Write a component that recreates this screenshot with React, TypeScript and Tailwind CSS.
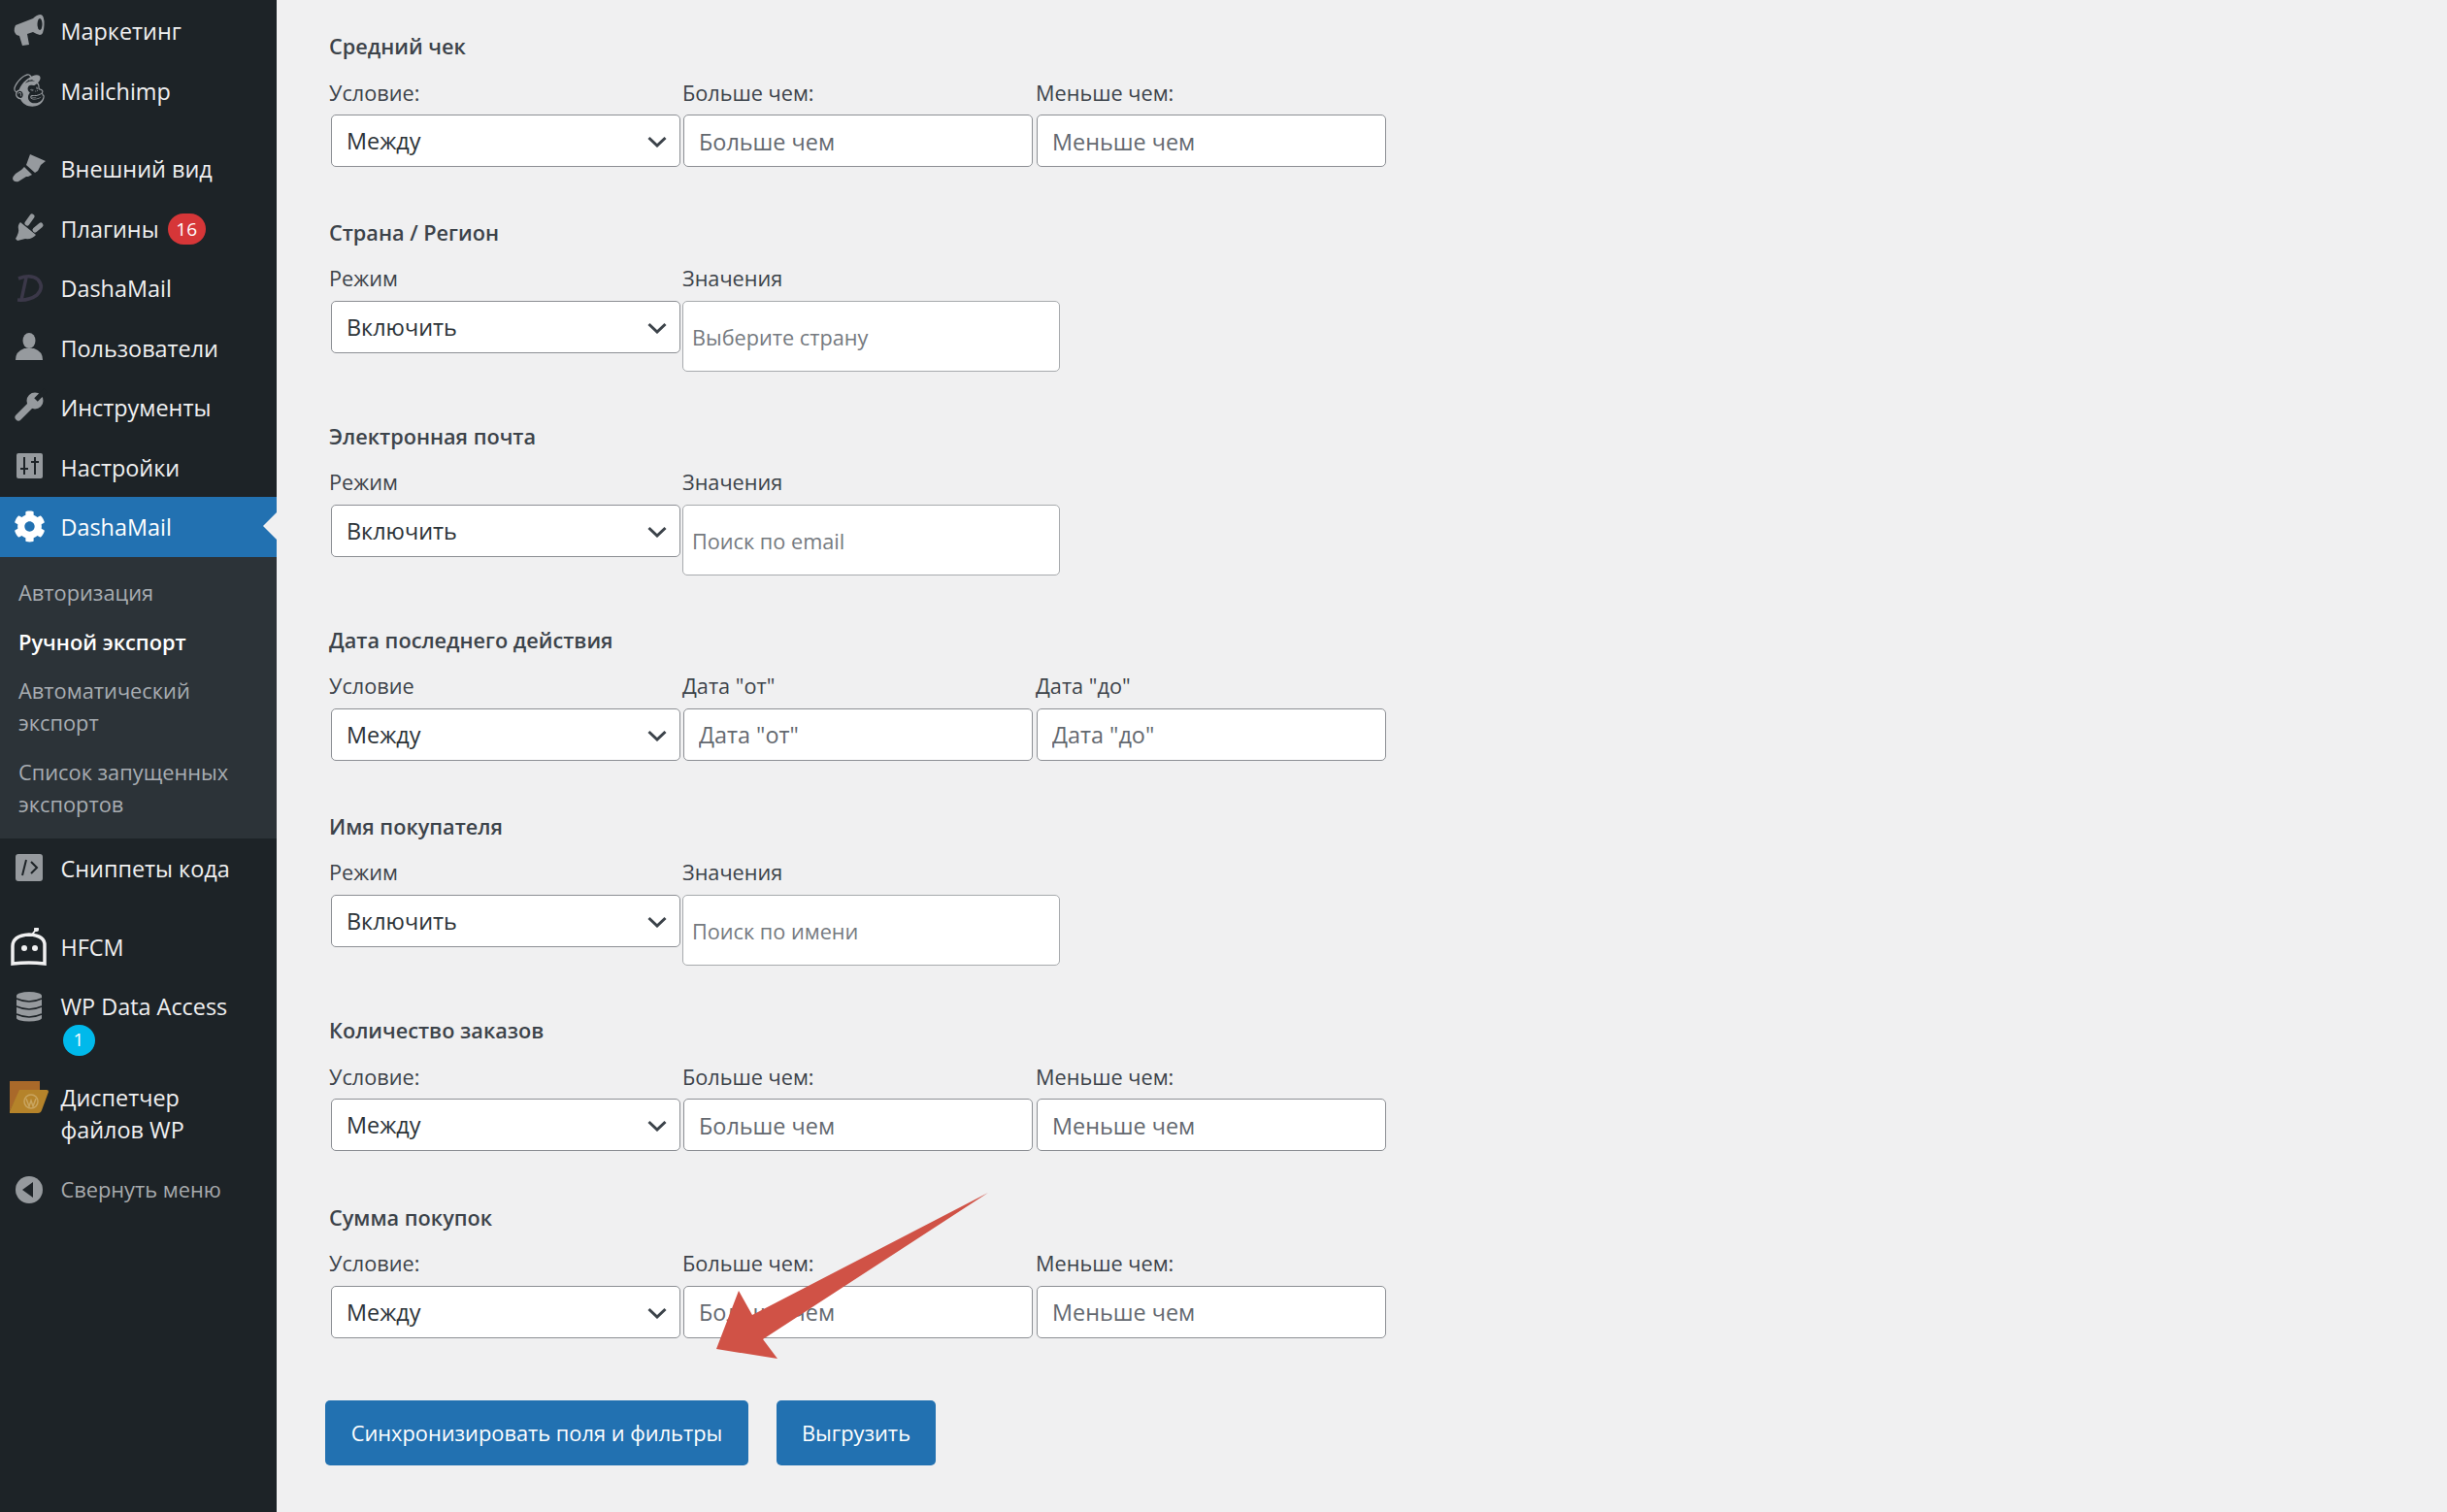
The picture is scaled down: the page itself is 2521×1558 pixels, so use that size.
import React from "react";
import { FaMailchimp, FaCog } from "react-icons/fa";

const G = "#969a9e";
const D = "#1d2327";

function Ic({ y, children }: { y: number; children: React.ReactNode }) {
  return (
    <svg width="40" height="40" viewBox={`10 ${y} 40 40`} className="shrink-0">
      {children}
    </svg>
  );
}

function Row({ icon, children, cls = "" }: { icon: React.ReactNode; children: React.ReactNode; cls?: string }) {
  return (
    <div className={`flex h-[61.5px] items-center pl-[10px] text-[23.4px] text-[#f0f0f1] ${cls}`}>
      <div className="mr-[12.5px] flex h-[40px] w-[40px] shrink-0 items-center justify-center">{icon}</div>
      <div className="flex items-center whitespace-nowrap pt-[2px]">{children}</div>
    </div>
  );
}

function Sidebar() {
  return (
    <aside className="relative w-[285px] shrink-0 bg-[#1d2327] pt-[1px]">
      <Row icon={<Ic y={12}><path fill={G} d="M16 26L34 19Q38 15 42 15Q46 16 45.5 26Q45 36 41 36Q37 35 34 33L28 35L30 46L23 47L20 37L17 36Q13 32 16 26Z" /><ellipse cx="41" cy="25" rx="2.5" ry="6" fill={D} /></Ic>}>Маркетинг</Row>
      <Row icon={<FaMailchimp size={38} color={G} />}>Mailchimp</Row>
      <div className="h-[19px]" />
      <Row icon={<Ic y={154}><path fill={G} d="M31 159L47 166L42 170L39 176L36 178L27 170Z" /><path fill={G} d="M25 172L33 180L29 182L27 182L19 187Q14 188 13 184Q13 182 16 179L22 175Z" /></Ic>}>Внешний вид</Row>
      <Row icon={<Ic y={216}><path fill={G} d="M21 230L37 243Q33 248 26 247L18 249L16 247Q20 240 19 237Q18 233 21 230Z" /><path stroke={G} strokeWidth="5" strokeLinecap="round" d="M33 224L28 231M42 233L36 238" /></Ic>}>
        Плагины
        <span className="ml-[9px] flex h-[32px] w-[39px] items-center justify-center rounded-full bg-[#d63638] text-[19px] text-white">16</span>
      </Row>
      <Row icon={<Ic y={277}><path fill="none" stroke="#3b3849" strokeWidth="3.5" d="M19 287Q32 282 39 288Q46 296 38 304Q30 310 18 309M27 286L22 309" /></Ic>}>DashaMail</Row>
      <Row icon={<Ic y={339}><ellipse cx="30" cy="352" rx="6.5" ry="8" fill={G} /><path fill={G} d="M16 372Q16 363 25 360L35 360Q44 363 44 372Z" /></Ic>}>Пользователи</Row>
      <Row icon={<Ic y={401}><path stroke={G} strokeWidth="7" strokeLinecap="round" d="M19 431L34 416" /><circle cx="36" cy="414" r="8.5" fill={G} /><path stroke={D} strokeWidth="5" d="M37 413L47 403" /></Ic>}>Инструменты</Row>
      <Row icon={<Ic y={462}><rect x="17" y="468" width="27" height="26" rx="2" fill={G} /><path stroke={D} strokeWidth="2" d="M25 472V490M21 484H29M36 472V490M32 477H40" /></Ic>}>Настройки</Row>
      <Row cls="relative bg-[#2271b1] text-white" icon={<FaCog size={33} color="#ffffff" />}>
        DashaMail
        <span className="absolute right-0 top-[16px] h-0 w-0 border-y-[14.5px] border-r-[14px] border-y-transparent border-r-[#f0f0f1]" />
      </Row>
      <div className="bg-[#2c3338] pb-[10px] pl-[19px] pt-[12px] text-[21.8px] leading-[33px] text-[#a8adb2]">
        <div className="py-[8.75px]">Авторизация</div>
        <div className="py-[8.75px] font-semibold text-white">Ручной экспорт</div>
        <div className="py-[8.75px]">Автоматический<br />экспорт</div>
        <div className="py-[8.75px]">Список запущенных<br />экспортов</div>
      </div>
      <Row icon={<Ic y={875}><rect x="16" y="881" width="28" height="28" rx="3" fill={G} /><path fill="none" stroke={D} strokeWidth="2" d="M27 887L23 903M32 889L38 895L32 901" /></Ic>}>Сниппеты кода</Row>
      <div className="h-[20px]" />
      <Row icon={<Ic y={956}><path fill="none" stroke="#f0f0f1" strokeWidth="3.5" d="M13 993V975Q13 964 30 963Q47 964 46 975V993Q30 991 13 993Z" /><circle cx="25" cy="977" r="3" fill="#f0f0f1" /><circle cx="36" cy="977" r="3" fill="#f0f0f1" /><path stroke="#f0f0f1" strokeWidth="2" d="M33 963L37 958" /><circle cx="37.5" cy="957.5" r="2.5" fill="#f0f0f1" /></Ic>}>HFCM</Row>
      <div className="flex h-[94px] items-start pl-[10px] pt-[10px] text-[23.4px] text-[#f0f0f1]">
        <div className="mr-[12.5px] shrink-0">
          <Ic y={1017}>
            <rect x="17" y="1026" width="26" height="23" fill={G} />
            <ellipse cx="30" cy="1026" rx="13" ry="4" fill={G} />
            <ellipse cx="30" cy="1049" rx="13" ry="3.5" fill={G} />
            <path fill="none" stroke={D} strokeWidth="1.6" d="M17 1029Q30 1035 43 1029M17 1037Q30 1043 43 1037M17 1045Q30 1051 43 1045" />
          </Ic>
        </div>
        <div className="pt-[4px] leading-[33px]">
          <div className="whitespace-nowrap">WP Data Access</div>
          <div className="ml-[2px] mt-[2px] flex h-[32px] w-[33px] items-center justify-center rounded-full bg-[#00b9eb] text-[19px] text-white">1</div>
        </div>
      </div>
      <div className="flex h-[95px] items-start pl-[10px] pt-[9px] text-[23.4px] text-[#f0f0f1]">
        <div className="mr-[12.5px] shrink-0">
          <Ic y={1110}>
            <path fill="#a9692a" d="M9 1114H41V1125H20L9 1147Z" />
            <path fill="#b5832a" d="M20 1123H48Q50 1123 50 1125L43 1144Q42 1147 39 1147H9Z" />
            <circle cx="32" cy="1135" r="7" fill="none" stroke="#c9a560" strokeWidth="1.5" />
            <path fill="none" stroke="#c9a560" strokeWidth="1.5" d="M27 1132L30 1140L32 1134L34 1140L37 1132" />
          </Ic>
        </div>
        <div className="pt-[5px] leading-[33px] whitespace-nowrap">Диспетчер<br />файлов WP</div>
      </div>
      <div className="flex h-[61px] items-center pl-[10px] text-[21.8px] text-[#a7aaad]">
        <div className="mr-[12.5px] shrink-0">
          <Ic y={1206}><circle cx="30" cy="1226" r="14" fill={G} /><path fill={D} d="M23 1226L34 1218V1234Z" /></Ic>
        </div>
        <span className="whitespace-nowrap">Свернуть меню</span>
      </div>
    </aside>
  );
}

const box = "h-[54px] rounded-[5px] border border-[#8c8f94] bg-white pt-[1px] text-[23.4px]";

function Select({ value }: { value: string }) {
  return (
    <div className="relative ml-[2px] w-[360px]">
      <select defaultValue={value} className={`${box} w-full appearance-none pl-[15px] text-[#2c3338] outline-none`}>
        <option>{value}</option>
      </select>
      <svg width="20" height="12" viewBox="0 0 20 12" className="absolute right-[14px] top-[22px]">
        <path d="M1.5 2L10 10L18.5 2" fill="none" stroke="#3c434a" strokeWidth="3" />
      </svg>
    </div>
  );
}

function Num({ ph }: { ph: string }) {
  return <input placeholder={ph} className={`${box} w-[360px] px-[15px] text-[#2c3338] outline-none placeholder:text-[#646970]`} />;
}

function Tag({ ph }: { ph: string }) {
  return (
    <input
      placeholder={ph}
      className="h-[73px] w-[389px] rounded-[5px] border border-[#a7aaad] bg-white px-[9px] pt-[2px] text-[21.7px] outline-none placeholder:text-[#757a80]"
    />
  );
}

function Label({ children, w = "w-[364px]" }: { children: React.ReactNode; w?: string }) {
  return <div className={`${w} h-[30px] text-[21.7px] leading-[30px] text-[#3c434a]`}>{children}</div>;
}

function SecNum({ title, a, b, c, ph1, ph2, value = "Между" }: { title: string; a: string; b: string; c: string; ph1: string; ph2: string; value?: string }) {
  return (
    <section className="mb-[52.4px]">
      <h2 className="mb-[16.5px] h-[32px] text-[21.7px] font-semibold leading-[32px] text-[#3c434a]">{title}</h2>
      <div className="mb-[7.5px] flex">
        <Label>{a}</Label>
        <Label>{b}</Label>
        <Label>{c}</Label>
      </div>
      <div className="flex">
        <Select value={value} />
        <div className="ml-[3px]"><Num ph={ph1} /></div>
        <div className="ml-[4px]"><Num ph={ph2} /></div>
      </div>
    </section>
  );
}

function SecTag({ title, ph }: { title: string; ph: string }) {
  return (
    <section className="mb-[50.8px]">
      <h2 className="mb-[16px] h-[32px] text-[21.7px] font-semibold leading-[32px] text-[#3c434a]">{title}</h2>
      <div className="mb-[8px] flex">
        <Label>Режим</Label>
        <Label>Значения</Label>
      </div>
      <div className="flex items-start">
        <Select value="Включить" />
        <div className="ml-[2px]"><Tag ph={ph} /></div>
      </div>
    </section>
  );
}

export default function App() {
  return (
    <div className="relative flex h-[1558px] overflow-hidden bg-[#f0f0f1] [font-family:'Open_Sans','Noto_Sans',sans-serif]">
      <Sidebar />
      <main className="flex-1 pl-[54px] pt-[32px]">
        <SecNum title="Средний чек" a="Условие:" b="Больше чем:" c="Меньше чем:" ph1="Больше чем" ph2="Меньше чем" />
        <SecTag title="Страна / Регион" ph="Выберите страну" />
        <SecTag title="Электронная почта" ph="Поиск по email" />
        <SecNum title="Дата последнего действия" a="Условие" b={'Дата "от"'} c={'Дата "до"'} ph1={'Дата "от"'} ph2={'Дата "до"'} />
        <SecTag title="Имя покупателя" ph="Поиск по имени" />
        <SecNum title="Количество заказов" a="Условие:" b="Больше чем:" c="Меньше чем:" ph1="Больше чем" ph2="Меньше чем" />
        <SecNum title="Сумма покупок" a="Условие:" b="Больше чем:" c="Меньше чем:" ph1="Больше чем" ph2="Меньше чем" />
        <div className="ml-[-4px] flex gap-[29px] pt-[12px]">
          <button className="h-[67px] w-[436px] rounded-[5px] bg-[#2271b1] pt-[2px] text-[21.8px] text-white">Синхронизировать поля и фильтры</button>
          <button className="h-[67px] w-[164px] rounded-[5px] bg-[#2271b1] pt-[2px] text-[21.8px] text-white">Выгрузить</button>
        </div>
      </main>
      <svg className="pointer-events-none absolute left-[730px] top-[1225px]" width="295" height="180" viewBox="730 1225 295 180">
        <polygon fill="#d05246" points="1018,1229 775,1355 761,1330 738,1390 801,1400 786,1380" />
      </svg>
    </div>
  );
}
